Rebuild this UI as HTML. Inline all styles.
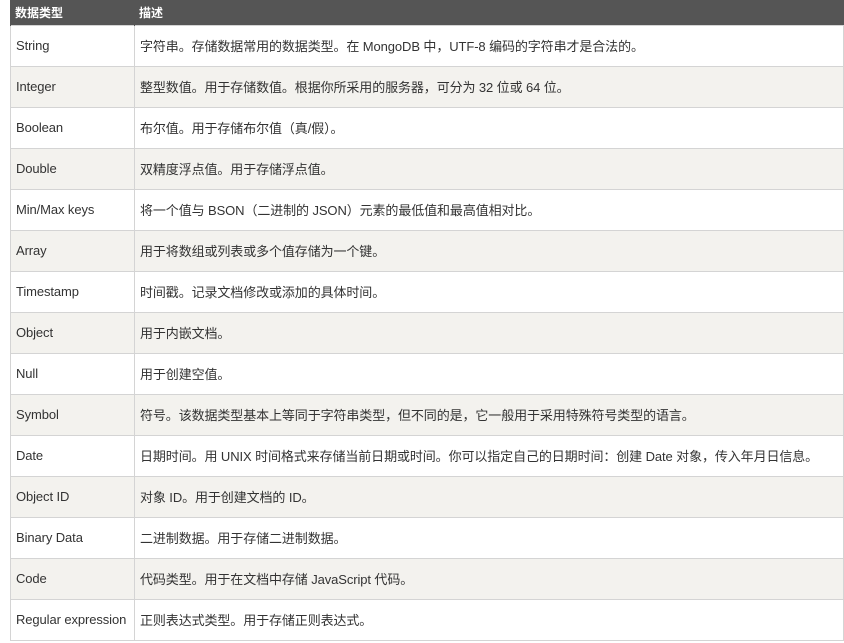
<!DOCTYPE html>
<html><head><meta charset="utf-8"><style>
*{margin:0;padding:0;box-sizing:border-box}
body{width:844px;height:643px;background:#fff;font-family:"Liberation Sans","Noto Sans CJK SC",sans-serif;font-size:13px;color:#333;overflow:hidden}
table{position:absolute;left:10px;top:0;width:834px;border-collapse:collapse}
th{background:#555;color:#fff;height:25px;text-align:left;font-weight:bold;font-size:12px;padding:0 4px;border-left:1px solid #555}
td{height:41px;border:1px solid #d4d4d4;padding:0 5px;vertical-align:middle;white-space:nowrap;letter-spacing:-0.1px}
td:first-child{width:124px}
tr:nth-child(odd) td{background:#f3f2ee}
</style></head><body>
<table>
<tr><th>数据类型</th><th>描述</th></tr>
<tr><td>String</td><td>字符串。存储数据常用的数据类型。在 MongoDB 中，UTF-8 编码的字符串才是合法的。</td></tr>
<tr><td>Integer</td><td>整型数值。用于存储数值。根据你所采用的服务器，可分为 32 位或 64 位。</td></tr>
<tr><td>Boolean</td><td>布尔值。用于存储布尔值（真/假）。</td></tr>
<tr><td>Double</td><td>双精度浮点值。用于存储浮点值。</td></tr>
<tr><td>Min/Max keys</td><td>将一个值与 BSON（二进制的 JSON）元素的最低值和最高值相对比。</td></tr>
<tr><td>Array</td><td>用于将数组或列表或多个值存储为一个键。</td></tr>
<tr><td>Timestamp</td><td>时间戳。记录文档修改或添加的具体时间。</td></tr>
<tr><td>Object</td><td>用于内嵌文档。</td></tr>
<tr><td>Null</td><td>用于创建空值。</td></tr>
<tr><td>Symbol</td><td>符号。该数据类型基本上等同于字符串类型，但不同的是，它一般用于采用特殊符号类型的语言。</td></tr>
<tr><td>Date</td><td>日期时间。用 UNIX 时间格式来存储当前日期或时间。你可以指定自己的日期时间：创建 Date 对象，传入年月日信息。</td></tr>
<tr><td>Object ID</td><td>对象 ID。用于创建文档的 ID。</td></tr>
<tr><td>Binary Data</td><td>二进制数据。用于存储二进制数据。</td></tr>
<tr><td>Code</td><td>代码类型。用于在文档中存储 JavaScript 代码。</td></tr>
<tr><td>Regular expression</td><td>正则表达式类型。用于存储正则表达式。</td></tr>
</table>
</body></html>
